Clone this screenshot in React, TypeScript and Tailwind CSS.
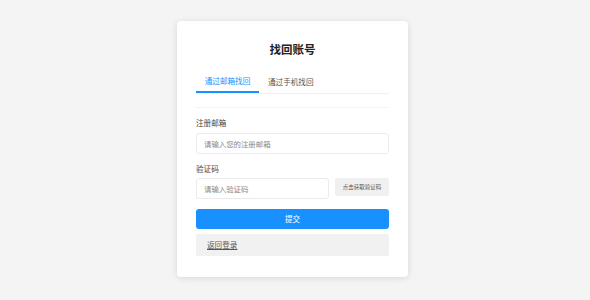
import React, { useState } from "react";

const App: React.FC = () => {
  const [tab, setTab] = useState(0);

  return (
    <div
      className="w-[590px] h-[300px] bg-[#f4f4f4] pt-[21px]"
      style={{ fontFamily: '"Noto Sans CJK SC", "Noto Sans", sans-serif' }}
    >
      <div className="ml-[177px] w-[231px] h-[256px] bg-white rounded-[4px] shadow-[0_1px_6px_rgba(0,0,0,0.12)] px-[19px] pt-[18px]">
        <h2 className="text-center text-[11.5px] font-bold leading-[20px] text-[#222]">找回账号</h2>
        <div className="mt-[12px] flex border-b border-[#f0f0f0] text-[7.6px] whitespace-nowrap">
          <button
            onClick={() => setTab(0)}
            className={
              tab === 0
                ? "w-[63px] h-[22px] text-center text-[#1890ff] border-b-2 border-[#1890ff] -mb-px"
                : "w-[63px] h-[22px] text-center text-[#555]"
            }
          >
            通过邮箱找回
          </button>
          <button
            onClick={() => setTab(1)}
            className={
              tab === 1
                ? "ml-[9px] h-[22px] text-left text-[#1890ff] border-b-2 border-[#1890ff] -mb-px"
                : "ml-[9px] h-[22px] text-left text-[#555]"
            }
          >
            通过手机找回
          </button>
        </div>
        <div className="mt-[13px] border-t border-[#f3f3f3]"></div>
        <div className="mt-[8px] text-[7.6px] leading-[14px] text-[#444]">注册邮箱</div>
        <input
          type="text"
          placeholder="请输入您的注册邮箱"
          className="mt-[3px] block w-full h-[21px] px-[7px] text-[7.4px] border border-[#ebebeb] rounded-[3px] outline-none placeholder:text-[#888]"
        />
        <div className="mt-[8px] text-[7.6px] leading-[14px] text-[#444]">验证码</div>
        <div className="mt-[2px] flex items-start gap-[6px]">
          <input
            type="text"
            placeholder="请输入验证码"
            className="block w-[133px] h-[21px] px-[7px] text-[7.4px] border border-[#ebebeb] rounded-[3px] outline-none placeholder:text-[#888]"
          />
          <button className="w-[54px] h-[18px] bg-[#f0f0f0] rounded-[2px] text-[5.5px] text-[#555] whitespace-nowrap">
            点击获取验证码
          </button>
        </div>
        <button className="mt-[10px] block w-full h-[20px] bg-[#1890ff] rounded-[3px] text-white text-[7.6px]">
          提交
        </button>
        <div className="mt-[5px] h-[22px] bg-[#f1f1f1] flex items-center pl-[11px] rounded-[2px]">
          <a className="text-[7.6px] text-[#555] underline">返回登录</a>
        </div>
      </div>
    </div>
  );
};

export default App;
